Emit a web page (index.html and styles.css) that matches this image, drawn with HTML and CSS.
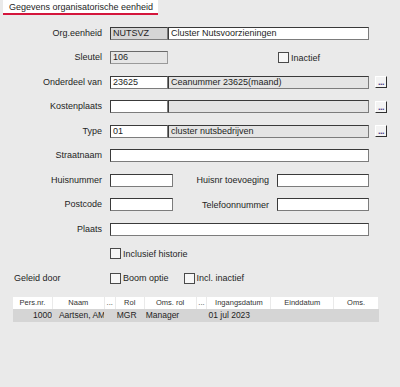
FILE: index.html
```html
<!DOCTYPE html>
<html lang="nl">
<head>
    <meta charset="UTF-8">
    <title>Gegevens organisatorische eenheid</title>
    <link rel="stylesheet" href="styles.css">
</head>
<body>
    <div class="tabbar">
        <span class="tab">Gegevens organisatorische eenheid</span>
    </div>

    <div class="form">
        <label>Org.eenheid</label>
        <div class="line">
            <span class="box code grey">NUTSVZ</span>
            <span class="box desc">Cluster Nutsvoorzieningen</span>
        </div>

        <label>Sleutel</label>
        <div class="line">
            <span class="box code flat">106</span>
            <span class="check push"><i></i>Inactief</span>
        </div>

        <label>Onderdeel van</label>
        <div class="line">
            <span class="box code">23625</span>
            <span class="box desc grey2">Ceanummer 23625(maand)</span>
            <span class="dots">...</span>
        </div>

        <label>Kostenplaats</label>
        <div class="line">
            <span class="box code"></span>
            <span class="box desc grey2"></span>
            <span class="dots">...</span>
        </div>

        <label>Type</label>
        <div class="line">
            <span class="box code">01</span>
            <span class="box desc grey2">cluster nutsbedrijven</span>
            <span class="dots">...</span>
        </div>

        <label>Straatnaam</label>
        <div class="line">
            <span class="box full"></span>
        </div>

        <label>Huisnummer</label>
        <div class="line">
            <span class="box short"></span>
            <span class="sublabel">Huisnr toevoeging</span>
            <span class="box half"></span>
        </div>

        <label>Postcode</label>
        <div class="line">
            <span class="box short"></span>
            <span class="sublabel">Telefoonnummer</span>
            <span class="box half"></span>
        </div>

        <label>Plaats</label>
        <div class="line">
            <span class="box full"></span>
        </div>

        <label></label>
        <div class="line">
            <span class="check"><i></i>Inclusief historie</span>
        </div>

        <label class="left">Geleid door</label>
        <div class="line">
            <span class="check"><i></i>Boom optie</span>
            <span class="check second"><i></i>Incl. inactief</span>
        </div>
    </div>

    <div class="grid">
        <div class="head">
            <span class="c1">Pers.nr.</span>
            <span class="c2">Naam</span>
            <span class="c3">...</span>
            <span class="c4">Rol</span>
            <span class="c5">Oms. rol</span>
            <span class="c6">...</span>
            <span class="c7">Ingangsdatum</span>
            <span class="c8">Einddatum</span>
            <span class="c9">Oms.</span>
        </div>
        <div class="data">
            <span class="c1 num">1000</span>
            <span class="c2">Aartsen, AMC</span>
            <span class="c3"></span>
            <span class="c4">MGR</span>
            <span class="c5">Manager</span>
            <span class="c6"></span>
            <span class="c7">01 jul 2023</span>
            <span class="c8"></span>
            <span class="c9"></span>
        </div>
    </div>
</body>
</html>
```

FILE: styles.css
```css
body {
    margin: 0;
    background-color: #eaeaea;
    color: #1e1e1e;
    font-family: "Liberation Sans", Arial, sans-serif;
    font-size: 9px;
}

/* tab header */
.tabbar {
    height: 15px;
    padding-left: 3px;
}
.tab {
    display: inline-block;
    background: #fff;
    padding: 1px 5px 0 6px;
    height: 12px;
    line-height: 12px;
    border-bottom: 2px solid #d4163c;
    white-space: nowrap;
}

/* form rows */
.form {
    display: grid;
    grid-template-columns: 102px 1fr;
    column-gap: 8px;
    grid-auto-rows: 13px;
    row-gap: 11.5px;
    padding-top: 11.5px;
}
.form label {
    text-align: right;
    line-height: 13px;
}
.form label.left {
    text-align: left;
    padding-left: 14px;
}
.line {
    display: flex;
    align-items: center;
    height: 13px;
}

.box {
    box-sizing: border-box;
    height: 13px;
    line-height: 11px;
    padding-left: 2px;
    background: #fff;
    border: 1px solid;
    border-color: #3a3a3a #7c7c7c #7c7c7c #3a3a3a;
    white-space: nowrap;
    overflow: hidden;
}
.code { width: 58px; }
.desc { width: 201px; }
.full { width: 259px; }
.short { width: 63px; }
.half { width: 92px; }
.grey { background: #d6d6d6; }
.grey2 { background: #e4e4e4; }
.flat { background: #e6e6e6; border-color: #6a6a6a #9a9a9a #9a9a9a #6a6a6a; }

.sublabel {
    width: 96px;
    margin-right: 8px;
    text-align: right;
}

.dots {
    box-sizing: border-box;
    width: 12px;
    height: 12px;
    margin-left: 6px;
    background: #f4f4f4;
    border: 1px solid;
    border-color: #fff #303030 #303030 #fff;
    font-size: 9px;
    line-height: 10px;
    text-align: center;
    color: #4b3c86;
    font-weight: bold;
    letter-spacing: -0.5px;
}

.check {
    display: flex;
    align-items: center;
    white-space: nowrap;
}
.check i {
    box-sizing: border-box;
    width: 11px;
    height: 11px;
    margin-right: 2px;
    background: #f7f7f7;
    border: 1px solid #4a4a4a;
}
.push { margin-left: 110px; }
.second { margin-left: 15px; }

/* persons grid */
.grid {
    margin: 12.5px 0 0 13px;
    width: 366px;
}
.head, .data {
    display: flex;
    height: 12px;
    line-height: 12px;
    white-space: nowrap;
}
.head span {
    background: #fff;
    margin-right: 1px;
    text-align: center;
    font-size: 7.5px;
    color: #333;
    overflow: hidden;
}
.data {
    background: #d5d5d5;
    height: 13px;
    line-height: 13px;
    font-size: 8.5px;
}
.data span {
    margin-right: 1px;
    overflow: hidden;
    padding-left: 1px;
    box-sizing: border-box;
}
.data .num {
    text-align: right;
    padding-right: 0;
}
.c1 { width: 39px; }
.c2 { width: 51px; }
.c3 { width: 10px; }
.c4 { width: 28px; }
.c5 { width: 51px; }
.c6 { width: 10px; }
.c7 { width: 63px; }
.c8 { width: 62px; }
.c9 { width: 44px; }
.data .c2 { padding-left: 6px; }
.data .c4, .data .c7 { padding-left: 1px; }
```
